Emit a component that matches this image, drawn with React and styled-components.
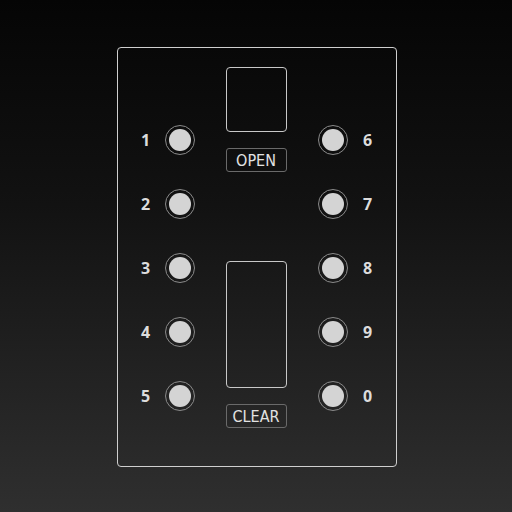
import React from "react";
import styled, { createGlobalStyle } from "styled-components";

const Global = createGlobalStyle`
  html, body { margin: 0; padding: 0; }
  body {
    width: 512px;
    height: 512px;
    background: linear-gradient(180deg, #050505 0%, #121212 40%, #2f2f2f 100%);
    font-family: "Open Sans", "DejaVu Sans", sans-serif;
    overflow: hidden;
  }
`;

const Page = styled.div`
  width: 512px;
  height: 512px;
  display: flex;
  justify-content: center;
  padding-top: 47px;
  box-sizing: border-box;
`;

const Panel = styled.div`
  box-sizing: border-box;
  width: 280px;
  height: 420px;
  margin-left: 1px;
  border: 1.5px solid #cfcfcf;
  border-radius: 4px;
  display: flex;
  justify-content: space-between;
  padding: 0 18px;
`;

const Side = styled.div`
  display: flex;
  flex-direction: column;
  padding-top: 60px;
`;

const Row = styled.div`
  height: 64px;
  display: flex;
  align-items: center;
  flex-direction: ${(p) => (p.$right ? "row-reverse" : "row")};
  gap: ${(p) => (p.$right ? 10 : 9)}px;
`;

const Num = styled.span`
  width: 20px;
  text-align: center;
  color: #dcdcdc;
  font-weight: 700;
  font-size: 16px;
  line-height: 1;
`;

const Button = styled.div`
  box-sizing: border-box;
  width: 30px;
  height: 30px;
  border-radius: 50%;
  border: 1px solid #8a8a8a;
  display: flex;
  align-items: center;
  justify-content: center;
  &::after {
    content: "";
    width: 22px;
    height: 22px;
    border-radius: 50%;
    background: #d4d4d4;
  }
`;

const Center = styled.div`
  display: flex;
  flex-direction: column;
  align-items: center;
  padding-top: 19px;
  width: 61px;
`;

const Window = styled.div`
  box-sizing: border-box;
  width: 61px;
  height: ${(p) => p.$h}px;
  border: 1.5px solid #c8c8c8;
  border-radius: 4px;
`;

const Label = styled.div`
  box-sizing: border-box;
  width: 61px;
  height: 24px;
  margin-top: 16px;
  margin-bottom: ${(p) => p.$mb || 0}px;
  border: 1px solid #6a6a6a;
  border-radius: 3px;
  color: #e2e2e2;
  font-family: "DejaVu Sans Condensed", "DejaVu Sans", sans-serif;
  font-stretch: condensed;
  font-size: 16px;
  display: flex;
  align-items: center;
  justify-content: center;
  padding-top: 1px;
`;

const left = ["1", "2", "3", "4", "5"];
const right = ["6", "7", "8", "9", "0"];

export default function App() {
  return (
    <>
      <Global />
      <Page>
        <Panel>
          <Side>
            {left.map((n) => (
              <Row key={n}>
                <Num>{n}</Num>
                <Button />
              </Row>
            ))}
          </Side>
          <Center>
            <Window $h={65} />
            <Label $mb={89}>OPEN</Label>
            <Window $h={127} />
            <Label>CLEAR</Label>
          </Center>
          <Side>
            {right.map((n) => (
              <Row key={n} $right>
                <Num>{n}</Num>
                <Button />
              </Row>
            ))}
          </Side>
        </Panel>
      </Page>
    </>
  );
}
